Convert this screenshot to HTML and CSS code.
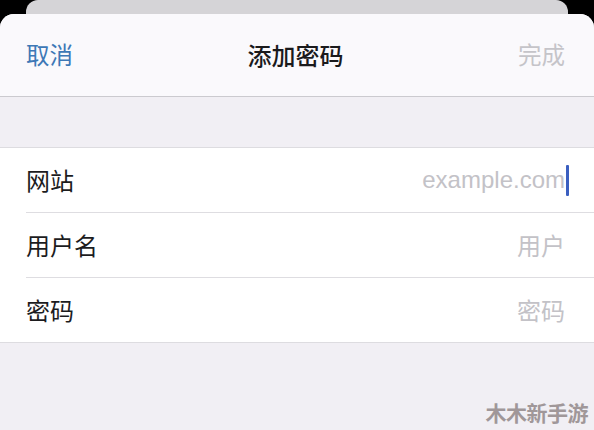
FILE: index.html
```html
<!DOCTYPE html>
<html lang="zh">
<head>
<meta charset="utf-8">
<link rel="stylesheet" href="styles.css">
</head>
<body>
<div class="screen">
  <div class="back-card"></div>
  <div class="sheet">
    <div class="nav">
      <span class="nav-btn cancel">取消</span>
      <span class="nav-title">添加密码</span>
      <span class="nav-btn done">完成</span>
    </div>
    <div class="gap"></div>
    <div class="group">
      <div class="row">
        <span class="label">网站</span>
        <span class="value"><span class="ph">example.com</span><span class="cursor"></span></span>
      </div>
      <div class="row">
        <span class="label">用户名</span>
        <span class="value"><span class="ph">用户</span></span>
      </div>
      <div class="row">
        <span class="label">密码</span>
        <span class="value"><span class="ph">密码</span></span>
      </div>
    </div>
    <div class="rest">
      <span class="watermark">木木新手游</span>
    </div>
  </div>
</div>
</body>
</html>
```

FILE: styles.css
```css
* { box-sizing: border-box; }
html, body {
  margin: 0;
  padding: 0;
  width: 594px;
  height: 430px;
  overflow: hidden;
  background: #000;
  font-family: "Noto Sans CJK SC", "Noto Sans", sans-serif;
}
.screen {
  display: flex;
  flex-direction: column;
  height: 430px;
}
.back-card {
  height: 14px;
  margin: 0 26px;
  background: #d5d4d7;
  border-radius: 12px 12px 0 0;
  flex: none;
}
.sheet {
  flex: 1;
  display: flex;
  flex-direction: column;
  background: #f1eff4;
  border-radius: 14px 14px 0 0;
  overflow: hidden;
}
.nav {
  height: 83px;
  flex: none;
  background: #faf9fc;
  border-bottom: 1px solid #cbcacf;
  display: flex;
  align-items: center;
  justify-content: space-between;
  padding: 0 29px 0 26px;
}
.nav-btn {
  font-size: 23.5px;
  line-height: 1;
  width: 90px;
}
.cancel { color: #3d78b6; }
.done { color: #c5c4c9; text-align: right; }
.nav-title {
  font-size: 24px;
  font-weight: 500;
  color: #1a1a1c;
  line-height: 1;
}
.gap {
  height: 50px;
  flex: none;
}
.group {
  flex: none;
  background: #fff;
  border-top: 1px solid #dddce0;
  border-bottom: 1px solid #dddce0;
}
.row {
  height: 65px;
  display: flex;
  align-items: center;
  justify-content: space-between;
  padding: 0 29px 0 26px;
  position: relative;
}
.row + .row::before {
  content: "";
  position: absolute;
  top: 0;
  left: 26px;
  right: 0;
  height: 1px;
  background: #dedde1;
}
.row:first-child { height: 64px; padding-right: 28px; }
.label {
  font-size: 24px;
  color: #1c1c1e;
  line-height: 1;
}
.value {
  display: flex;
  align-items: center;
}
.ph {
  font-size: 24px;
  color: #c3c2c7;
  line-height: 1;
}
.row:first-child .ph {
  font-family: "Liberation Sans", "Noto Sans", sans-serif;
}
.cursor {
  width: 3px;
  height: 31px;
  background: #3b5fc0;
  border-radius: 1px;
  margin-left: 1px;
  margin-right: -3px;
}
.rest {
  flex: 1;
  display: flex;
  align-items: flex-end;
  justify-content: flex-end;
  padding: 0 6px 7px 0;
}
.watermark {
  font-size: 21px;
  font-weight: 700;
  color: #a09799;
  line-height: 1;
  letter-spacing: -0.5px;
}
```
